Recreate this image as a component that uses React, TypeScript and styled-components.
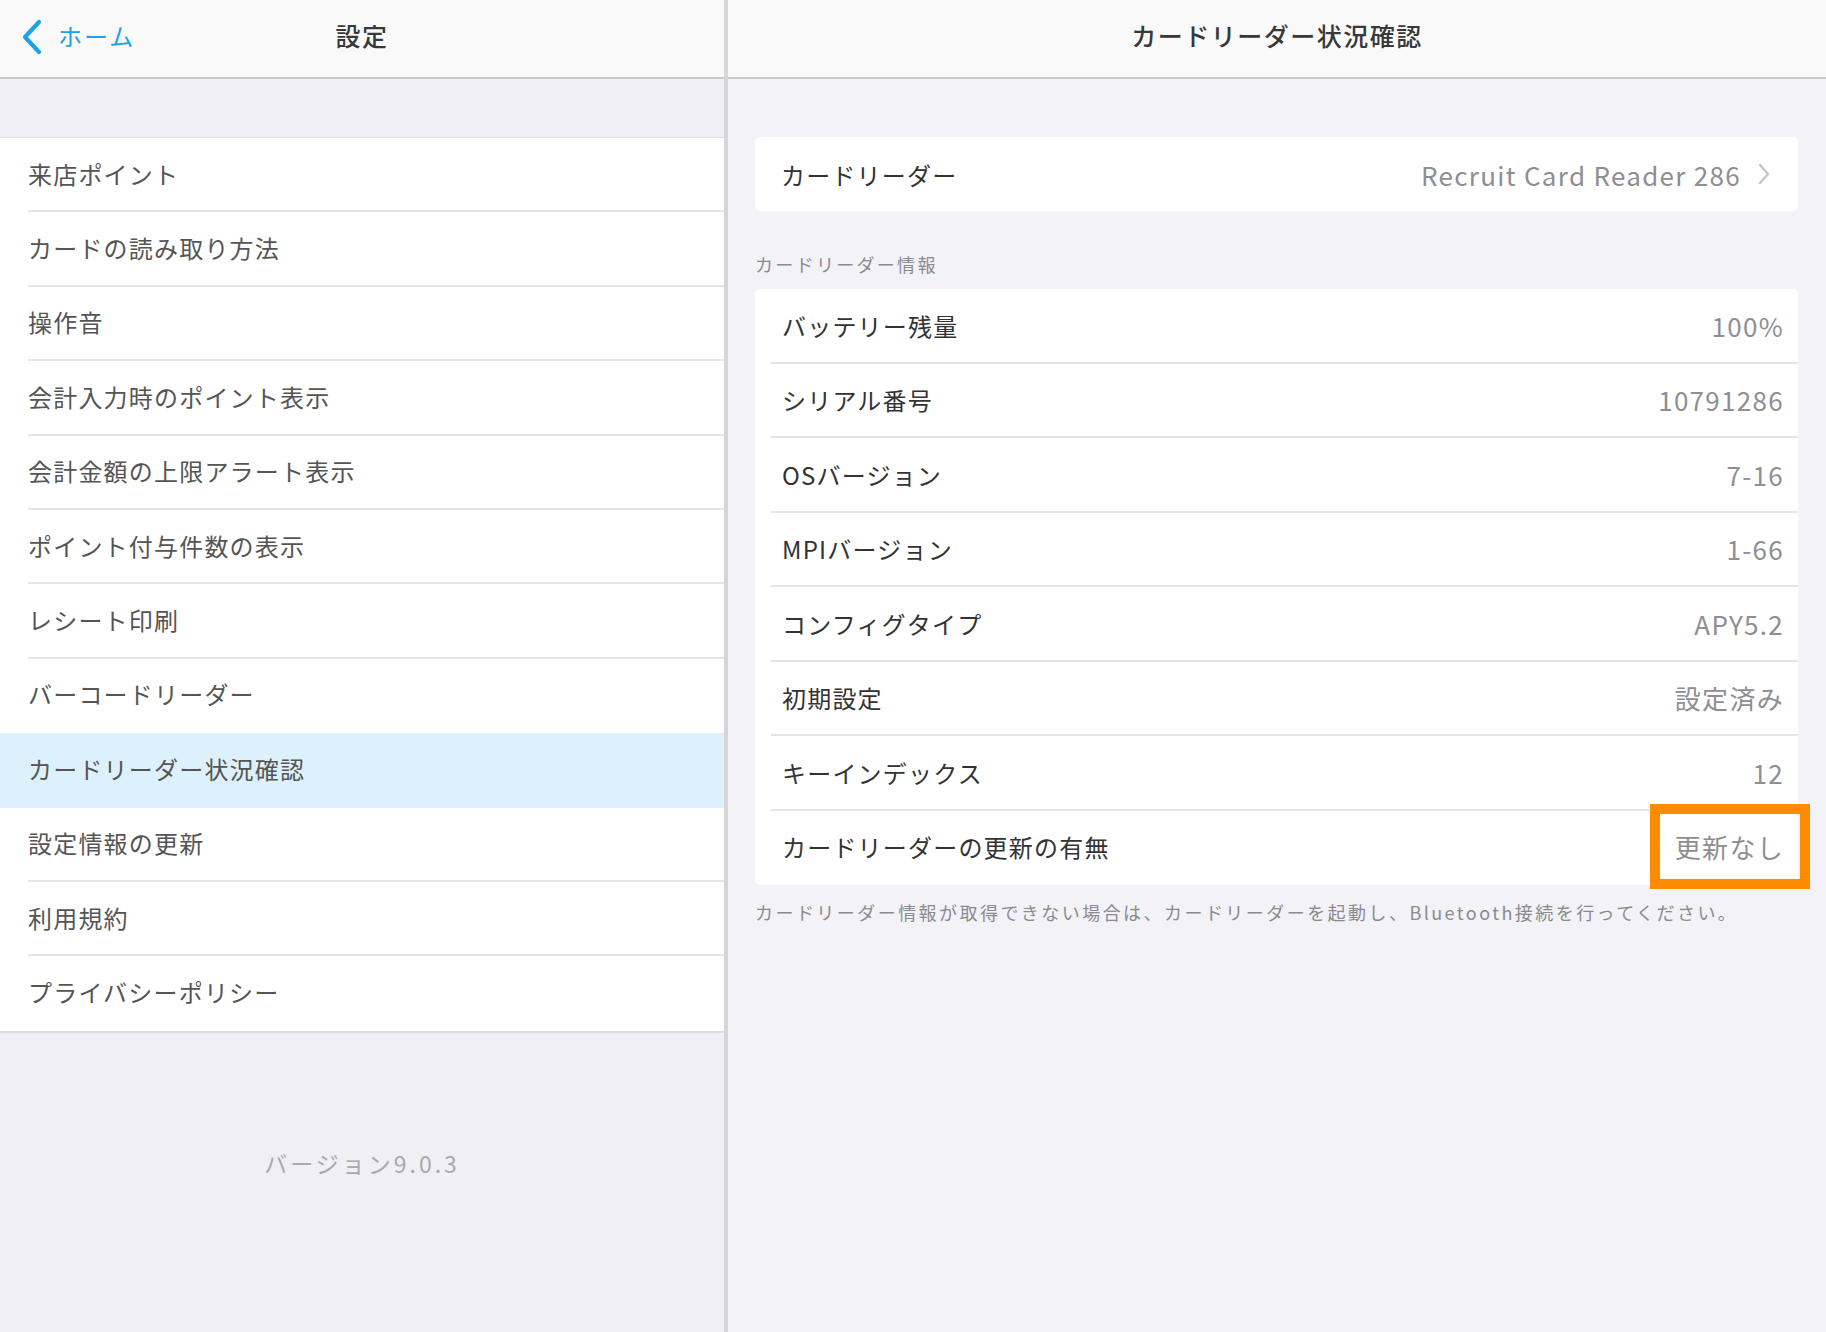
import { styled, createGlobalStyle } from "styled-components";

const GlobalStyle = createGlobalStyle`
  html, body {
    margin: 0;
    padding: 0;
  }
  body {
    font-family: "Noto Sans CJK JP", "Noto Sans", sans-serif;
    -webkit-font-smoothing: antialiased;
  }
`;

const menuItems = [
  "来店ポイント",
  "カードの読み取り方法",
  "操作音",
  "会計入力時のポイント表示",
  "会計金額の上限アラート表示",
  "ポイント付与件数の表示",
  "レシート印刷",
  "バーコードリーダー",
  "カードリーダー状況確認",
  "設定情報の更新",
  "利用規約",
  "プライバシーポリシー",
];

const activeIndex = 8;

const readerInfo = [
  { label: "バッテリー残量", value: "100%" },
  { label: "シリアル番号", value: "10791286" },
  { label: "OSバージョン", value: "7-16" },
  { label: "MPIバージョン", value: "1-66" },
  { label: "コンフィグタイプ", value: "APY5.2" },
  { label: "初期設定", value: "設定済み" },
  { label: "キーインデックス", value: "12" },
  { label: "カードリーダーの更新の有無", value: "更新なし", marked: true },
];

const App = () => {
  return (
    <>
      <GlobalStyle />
      <Screen>
        <LeftPane>
          <NavBar>
            <BackButton>
              <svg width="22" height="36" viewBox="0 0 22 36">
                <polyline
                  points="18,3 4,18 18,33"
                  fill="none"
                  stroke="#1ea3e6"
                  strokeWidth="4.2"
                  strokeLinecap="round"
                  strokeLinejoin="round"
                />
              </svg>
              <span>ホーム</span>
            </BackButton>
            <NavTitle>設定</NavTitle>
            <span />
          </NavBar>
          <LeftBody>
            <MenuList>
              {menuItems.map((item, i) => (
                <MenuRow key={item} $active={i === activeIndex}>
                  <MenuLabel
                    $noLine={
                      i === activeIndex ||
                      i === activeIndex - 1 ||
                      i === menuItems.length - 1
                    }
                  >
                    {item}
                  </MenuLabel>
                </MenuRow>
              ))}
            </MenuList>
            <Version>バージョン9.0.3</Version>
          </LeftBody>
        </LeftPane>

        <Divider />

        <RightPane>
          <NavBar>
            <span />
            <NavTitle>カードリーダー状況確認</NavTitle>
            <span />
          </NavBar>
          <RightBody>
            <Card>
              <ReaderRow>
                <RowLabel>カードリーダー</RowLabel>
                <ReaderValue>
                  Recruit Card Reader 286
                  <svg width="14" height="22" viewBox="0 0 14 22">
                    <polyline
                      points="3,2 11,11 3,20"
                      fill="none"
                      stroke="#c4c4c9"
                      strokeWidth="2.4"
                      strokeLinecap="round"
                      strokeLinejoin="round"
                    />
                  </svg>
                </ReaderValue>
              </ReaderRow>
            </Card>

            <SectionHeader>カードリーダー情報</SectionHeader>

            <Card>
              {readerInfo.map((row, i) => (
                <InfoRow key={row.label}>
                  <InfoInner $noLine={i === readerInfo.length - 1}>
                    <RowLabel>{row.label}</RowLabel>
                    <RowValue>{row.value}</RowValue>
                  </InfoInner>
                  {row.marked && <Marker />}
                </InfoRow>
              ))}
            </Card>

            <Note>
              カードリーダー情報が取得できない場合は、カードリーダーを起動し、Bluetooth接続を行ってください。
            </Note>
          </RightBody>
        </RightPane>
      </Screen>
    </>
  );
};

export default App;

const Screen = styled.div`
  width: 1826px;
  height: 1332px;
  display: flex;
  overflow: hidden;
`;

const LeftPane = styled.div`
  width: 724px;
  background-color: #efeff4;
  display: flex;
  flex-direction: column;
`;

const RightPane = styled.div`
  flex: 1;
  background-color: #f2f2f7;
  display: flex;
  flex-direction: column;
`;

const Divider = styled.div`
  width: 4px;
  background-color: #d5d5da;
`;

const NavBar = styled.div`
  height: 77px;
  flex-shrink: 0;
  background-color: #f9f9f9;
  border-bottom: 2px solid #c9c9cd;
  display: grid;
  grid-template-columns: 1fr auto 1fr;
  align-items: center;
`;

const NavTitle = styled.div`
  font-size: 25px;
  font-weight: 500;
  letter-spacing: 1.5px;
  color: #383838;
  padding-bottom: 7px;
`;

const BackButton = styled.div`
  display: flex;
  align-items: center;
  gap: 15px;
  padding-left: 21px;
  color: #1ea3e6;
  font-size: 24px;
  letter-spacing: 2px;
  padding-bottom: 7px;

  svg {
    flex-shrink: 0;
    margin-top: 3px;
  }
`;

const LeftBody = styled.div`
  padding-top: 58px;
  display: flex;
  flex-direction: column;
`;

const MenuList = styled.div`
  background-color: #ffffff;
  border-top: 1px solid #e2e2e6;
  border-bottom: 2px solid #dcdce0;
`;

const MenuRow = styled.div<{ $active?: boolean }>`
  padding-left: 28px;
  background-color: ${(p) => (p.$active ? "#ddf1fc" : "#ffffff")};
`;

const MenuLabel = styled.div<{ $noLine?: boolean }>`
  height: 74.4px;
  box-sizing: border-box;
  display: flex;
  align-items: center;
  padding-bottom: 2px;
  font-size: 24px;
  letter-spacing: 1.2px;
  color: #555555;
  border-bottom: 2px solid ${(p) => (p.$noLine ? "transparent" : "#e6e6e9")};
`;

const Version = styled.div`
  padding-top: 118px;
  text-align: center;
  font-size: 23px;
  line-height: 24px;
  letter-spacing: 3px;
  color: #a9a9ae;
`;

const RightBody = styled.div`
  padding: 58px 28px 0 27px;
  display: flex;
  flex-direction: column;
`;

const Card = styled.div`
  background-color: #ffffff;
  border-radius: 5px;
`;

const ReaderRow = styled.div`
  height: 74px;
  display: flex;
  align-items: center;
  justify-content: space-between;
  padding: 0 27px 0 26px;
`;

const RowLabel = styled.div`
  font-size: 24px;
  letter-spacing: 1.2px;
  color: #333333;
`;

const RowValue = styled.div`
  font-size: 26px;
  letter-spacing: 1.3px;
  color: #8e8e93;
`;

const ReaderValue = styled(RowValue)`
  display: flex;
  align-items: center;
  gap: 16px;
`;

const SectionHeader = styled.div`
  padding: 41px 0 13px 0;
  font-size: 18px;
  line-height: 24px;
  letter-spacing: 2.3px;
  color: #8a8a8f;
`;

const InfoRow = styled.div`
  position: relative;
  padding-left: 16px;
`;

const InfoInner = styled.div<{ $noLine?: boolean }>`
  height: 74.5px;
  box-sizing: border-box;
  display: flex;
  align-items: center;
  justify-content: space-between;
  padding: 0 14px 0 11px;
  border-bottom: 2px solid ${(p) => (p.$noLine ? "transparent" : "#e6e6ea")};
`;

const Marker = styled.div`
  position: absolute;
  top: -7px;
  bottom: -4px;
  right: -12px;
  width: 160px;
  box-sizing: border-box;
  border: 10px solid #ff8c00;
  pointer-events: none;
`;

const Note = styled.div`
  padding-top: 15px;
  font-size: 18px;
  line-height: 24px;
  letter-spacing: 2.45px;
  color: #8a8a8f;
`;
